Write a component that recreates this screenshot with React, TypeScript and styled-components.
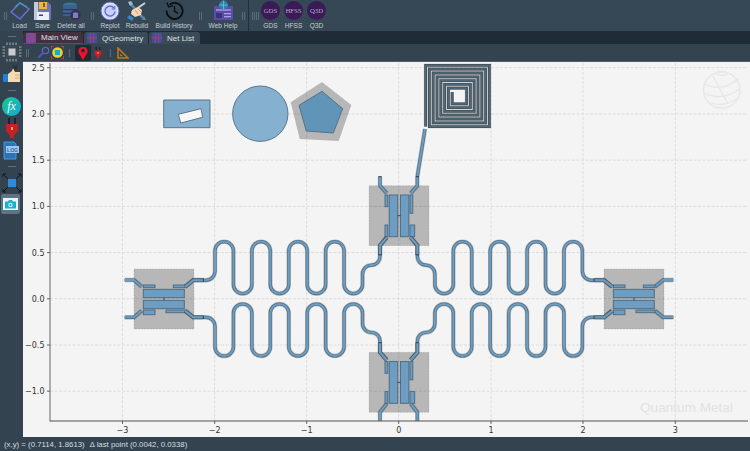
import React from 'react';
import styled, { createGlobalStyle } from 'styled-components';

const GlobalStyle = createGlobalStyle`
	html, body {
		margin: 0;
		padding: 0;
		background: #33434f;
	}
	body {
		font-family: "Liberation Sans", Arial, sans-serif;
	}
`;

const Page = styled.div`
	width: 750px;
	height: 451px;
	overflow: hidden;
	display: grid;
	grid-template-rows: 31px 406px 14px;
	background: #33434f;
`;

const TopBar = styled.div`
	display: flex;
	align-items: stretch;
	padding-left: 4px;
	background: #364755;
`;

const Grip = styled.div`
	width: 3px;
	height: 8px;
	align-self: center;
	margin: ${(p: { $m?: string }) => p.$m || '0'};
	border-left: 1px solid #5b6c79;
	border-right: 1px solid #5b6c79;
	box-sizing: border-box;
`;

const Divider = styled.div`
	width: 1px;
	background: #22303b;
	margin: 0 3px;
`;

const ToolButton = styled.div<{ $w: number }>`
	width: ${(p) => p.$w}px;
	display: flex;
	flex-direction: column;
	align-items: center;
`;

const IconSlot = styled.div`
	height: 21px;
	display: flex;
	align-items: center;
	justify-content: center;
`;

const ToolLabel = styled.span`
	font-size: 6.6px;
	line-height: 10px;
	color: #c6ced5;
	white-space: nowrap;
`;

const Body = styled.div`
	display: grid;
	grid-template-columns: 23px 1fr;
	min-height: 0;
`;

const Sidebar = styled.div`
	display: flex;
	flex-direction: column;
	background: #33434f;
`;

const SideItem = styled.div<{ $h: number; $active?: boolean }>`
	height: ${(p) => p.$h}px;
	display: flex;
	align-items: center;
	justify-content: center;
	flex: none;
	${(p) => p.$active && `
		background: #5f7482;
		border-radius: 2px;
		margin: 0 3px 0 1px;
	`}
`;

const SideRule = styled.div`
	width: 8px;
	height: 1px;
	background: #5f6f7b;
`;

const Main = styled.div`
	display: flex;
	flex-direction: column;
	min-width: 0;
`;

const TabStrip = styled.div`
	height: 13px;
	box-sizing: border-box;
	padding-top: 1px;
	display: flex;
	gap: 1px;
	background: #1f2b36;
`;

const Tab = styled.div<{ $w: number; $active?: boolean }>`
	width: ${(p) => p.$w}px;
	box-sizing: border-box;
	display: flex;
	align-items: center;
	gap: 5px;
	padding-left: 3px;
	font-size: 8px;
	color: #dde2e6;
	background: ${(p) => (p.$active ? '#43303f' : '#3a4a57')};
	border-radius: 3px 3px 0 0;
	border-bottom: ${(p) => (p.$active ? '1px solid #2a5f8f' : 'none')};
`;

const SubBar = styled.div`
	height: 17px;
	display: flex;
	align-items: center;
	background: #33434f;
	border-bottom: 1px solid #505f6b;
`;

const SubButton = styled.div<{ $w: number; $active?: boolean }>`
	width: ${(p) => p.$w}px;
	height: 16px;
	display: flex;
	align-items: center;
	justify-content: center;
	border-radius: 2px;
	background: ${(p) => (p.$active ? '#1f2a33' : 'transparent')};
`;

const SubSep = styled.div`
	width: 1px;
	height: 8px;
	background: #5b6c79;
	margin: 0 5px;
`;

const Canvas = styled.svg`
	display: block;
	flex: 1;
	width: 727px;
	height: 375px;
	background: #f4f4f4;
`;

const StatusBar = styled.div`
	display: flex;
	align-items: center;
	gap: 5px;
	padding-left: 4px;
	font-size: 7.8px;
	color: #d7dee3;
	background: #33434f;
	white-space: pre;
`;

const GridLine = styled.line`
	stroke: #dcdcdc;
	stroke-width: 1;
	stroke-dasharray: 3 1.5;
`;

const TickMark = styled.line`
	stroke: #444;
	stroke-width: 0.8;
`;

const TickText = styled.text`
	font-family: "DejaVu Sans", sans-serif;
	font-size: 8px;
	fill: #333;
`;

const Watermark = styled.text`
	font-family: "Liberation Sans", Arial, sans-serif;
	font-size: 13.6px;
	fill: #e2e2e2;
`;

const GapBlock = styled.rect`
	fill: #000;
	fill-opacity: 0.25;
	stroke: #000;
	stroke-opacity: 0.12;
	stroke-width: 0.8;
	stroke-dasharray: 2 1;
`;

const Pad = styled.rect`
	fill: #6d9dc2;
	stroke: #4a677c;
	stroke-width: 0.9;
`;

const TraceGap = styled.path`
	fill: none;
	stroke: #000;
	stroke-opacity: 0.25;
	stroke-width: 4.4;
`;

const TraceEdge = styled.path`
	fill: none;
	stroke: #4d6a80;
	stroke-width: 3.2;
`;

const TraceCore = styled.path`
	fill: none;
	stroke: #6c9dc2;
	stroke-width: 2;
`;

const Trace = ({ d }: { d: string }) => (
	<>
		<TraceGap d={d} />
		<TraceEdge d={d} />
		<TraceCore d={d} />
	</>
);

const Joint = styled.path`
	fill: none;
	stroke: #26343f;
	stroke-width: 0.9;
`;

const Poly = styled.polygon<{ $fill: string }>`
	fill: ${(p) => p.$fill};
	stroke: #4f6c82;
	stroke-width: 0.9;
`;

const xTicks: [number, string][] = [
	[122.5, '−3'], [214.7, '−2'], [306.7, '−1'], [398.7, '0'], [491, '1'], [583, '2'], [675.3, '3'],
];
const yTicks: [number, string][] = [
	[67.7, '2.5'], [114, '2.0'], [160.2, '1.5'], [206.4, '1.0'], [252.6, '0.5'], [298.8, '0.0'], [345, '−0.5'], [391.2, '−1.0'],
];

// bottom left meander, the other three are mirrors of it
const meander = () => {
	const pitch = 18.44;
	let d = 'M185 310.7 L193.3 317.3 H206 A9 9 0 0 1 215 326.3';
	for (let i = 0; i < 8; i++) {
		const x = 215 + i * pitch;
		const down = i % 2 === 0;
		d += down
			? ` V346.8 A9.22 9.22 0 0 0 ${x + pitch} 346.8`
			: ` V313.2 A9.22 9.22 0 0 1 ${x + pitch} 313.2`;
	}
	d += ' V323.5 A9 9 0 0 0 371.5 332.5 A8.5 8.5 0 0 1 380 341 V352.3 L386.7 360';
	return d;
};

const spiral = () => {
	const p = 3.8;
	let x0 = 425.6, x1 = 489.4, y0 = 65.4, y1 = 126.6;
	let d = `M${x0} ${y1} V${y0}`;
	for (let i = 0; i < 7; i++) {
		d += ` H${x1} V${y1}`;
		x0 += p;
		d += ` H${x0}`;
		y0 += p;
		d += ` V${y0}`;
		x1 -= p;
		y1 -= p;
	}
	return d;
};

// transmon laid out along x, centre (164, 299)
const HorizontalQubit = ({ dx }: { dx: number }) => (
	<g transform={`translate(${dx} 0)`}>
		<GapBlock x={134} y={269} width={60} height={60} />
		<Trace d="M124.7 280 H134 L141.7 286.7" />
		<Trace d="M124.7 317.3 H134 L141.7 310.7" />
		<Trace d="M185 286.7 L193.3 280 H203.3" />
		<Trace d="M185 310.7 L193.3 317.3 H203.3" />
		<Pad x={143.3} y={289.3} width={41} height={8.4} />
		<Pad x={143.3} y={300.3} width={41} height={8.4} />
		<Pad x={143.3} y={285} width={11.7} height={2.7} />
		<Pad x={173.3} y={285} width={11.7} height={2.7} />
		<Pad x={143.3} y={310} width={11.7} height={4.7} />
		<Pad x={166} y={310} width={19} height={2.7} />
		<Joint d="M164 297.7 V300.3" />
	</g>
);

// same transmon turned on its side, dy moves it to the lower slot
const VerticalQubit = ({ dy }: { dy: number }) => (
	<g transform={`translate(0 ${dy})`}>
		<GapBlock x={369} y={185.7} width={60} height={60} />
		<Trace d="M380 176.7 V185.7 L386.7 193.3" />
		<Trace d="M417.3 176.7 V185.7 L410.7 193.3" />
		<Trace d="M386.7 237 L380 245.7 V255" />
		<Trace d="M410.7 237 L417.3 245.7 V255" />
		<Pad x={389.2} y={195} width={8.5} height={41.7} />
		<Pad x={400.4} y={195} width={8.5} height={41.7} />
		<Pad x={385} y={195} width={2.8} height={11.7} />
		<Pad x={410} y={195} width={2.8} height={18.3} />
		<Pad x={385} y={225} width={2.8} height={11.7} />
		<Pad x={410} y={225} width={4.7} height={11.7} />
		<Joint d="M397.7 215.7 H400.4" />
	</g>
);

const Plot = () => {
	const m = meander();
	const s = spiral();
	return (
		<Canvas viewBox="23 62 727 375">
			<defs>
				<clipPath id="axes">
					<rect x={50} y={62} width={698} height={359} />
				</clipPath>
			</defs>
			{xTicks.map(([x]) => <GridLine key={x} x1={x} x2={x} y1={63} y2={421} />)}
			{yTicks.map(([y]) => <GridLine key={y} x1={50} x2={748} y1={y} y2={y} />)}

			<g fill="none" stroke="#e6e6e6" strokeWidth={1.3}>
				<circle cx={721.7} cy={90} r={18.2} />
				<ellipse cx={721.7} cy={73.5} rx={5} ry={1.8} />
				<path d="M704 84 Q722 93 739 78" />
				<path d="M704 93 Q722 102 739.5 89" />
				<path d="M708 102 Q722 108 737 99" />
				<path d="M713 76 L728 104" />
			</g>
			<Watermark x={640} y={411.5}>Quantum Metal</Watermark>

			<g clipPath="url(#axes)">
				<Poly $fill="#86b0d0" points="163.7,100 210,100 210,127.7 163.7,127.7" />
				<Poly $fill="#f7f7f7" points="178.3,114.3 201,108.7 202.7,117.3 180.7,123" />
				<circle cx={260.3} cy={113.7} r={27.7} fill="#86b0d0" stroke="#4f6c82" strokeWidth={0.9} />
				<polygon points="322,82 351.3,105 338.7,141 299.7,139 290.7,102.3" fill="#000" fillOpacity={0.25} />
				<Poly $fill="#6095b8" points="322,91.3 342.7,108.7 333.3,133 306.3,131 299,105.3" />

				<path d={s} fill="none" stroke="#000" strokeOpacity={0.25} strokeWidth={3.5} />
				<path d={s} fill="none" stroke="#45555f" strokeWidth={2.8} />
				<path d={s} fill="none" stroke="#567184" strokeWidth={0.8} />
				<Trace d="M417.3 176.7 L425 129" />

				<HorizontalQubit dx={0} />
				<HorizontalQubit dx={470} />
				<VerticalQubit dy={0} />
				<VerticalQubit dy={166.6} />

				<Trace d={m} />
				<g transform="matrix(-1 0 0 1 797.4 0)"><Trace d={m} /></g>
				<g transform="matrix(1 0 0 -1 0 597.6)"><Trace d={m} /></g>
				<g transform="matrix(-1 0 0 -1 797.4 597.6)"><Trace d={m} /></g>

				<Joint d="M203.3 278.4 V281.6 M203.3 315.7 V318.9 M594.1 278.4 V281.6 M594.1 315.7 V318.9" />
				<Joint d="M378.4 176.7 H381.6 M415.7 176.7 H418.9 M378.4 254.9 H381.6 M415.7 254.9 H418.9" />
				<Joint d="M378.4 342.7 H381.6 M415.7 342.7 H418.9" />
			</g>

			<line x1={50} x2={50} y1={63} y2={421.5} stroke="#8d8d8d" strokeWidth={1.4} />
			<line x1={50} x2={748} y1={421} y2={421} stroke="#555" strokeWidth={1} />
			{xTicks.map(([x, t]) => (
				<g key={t}>
					<TickMark x1={x} x2={x} y1={421} y2={424} />
					<TickText x={x} y={433} textAnchor="middle">{t}</TickText>
				</g>
			))}
			{yTicks.map(([y, t]) => (
				<g key={t}>
					<TickMark x1={47} x2={50} y1={y} y2={y} />
					<TickText x={44.5} y={y + 3} textAnchor="end">{t}</TickText>
				</g>
			))}
		</Canvas>
	);
};

const LoadIcon = () => (
	<svg width="20" height="20" viewBox="0 0 20 20" fill="none">
		<path d="M1 11 L10 2 L19 8 L10 18 Z" stroke="#6f6fd8" strokeWidth="1.4" />
		<path d="M5 6 L10 2 L17 6" stroke="#3f9fb5" strokeWidth="1.2" />
	</svg>
);

const SaveIcon = () => (
	<svg width="19" height="20" viewBox="0 0 19 20">
		<path d="M1 1 H15 L18 4 V19 H1 Z" fill="#6f74b8" />
		<path d="M1 1 H5 V19 H1 Z" fill="#c3c6e6" />
		<rect x="6" y="1" width="8" height="7" fill="#f3b23a" />
		<rect x="10" y="2" width="2" height="4" fill="#8b5a12" />
		<rect x="4" y="11" width="12" height="8" fill="#eceef8" />
		<rect x="6" y="13.5" width="4" height="1.5" fill="#3c4270" />
	</svg>
);

const DeleteIcon = () => (
	<svg width="19" height="20" viewBox="0 0 19 20">
		<ellipse cx="8" cy="4" rx="7" ry="2.5" fill="#2f7d92" />
		<rect x="1" y="4" width="14" height="11" fill="#3d5f96" />
		<rect x="1" y="8" width="14" height="1" fill="#2a3a55" />
		<rect x="1" y="12" width="14" height="1" fill="#2a3a55" />
		<circle cx="13.5" cy="14" r="5.2" fill="#34344f" />
		<rect x="11" y="11.5" width="5" height="5.5" rx="0.6" fill="#7d7fc0" />
	</svg>
);

const ReplotIcon = () => (
	<svg width="20" height="20" viewBox="0 0 20 20" fill="none">
		<circle cx="10" cy="10" r="9" fill="#dfe4f7" stroke="#5f6bc4" strokeWidth="1" />
		<circle cx="10" cy="10" r="7" fill="#c9d0f2" />
		<path d="M14 7 A5 5 0 1 0 15 10.5" stroke="#5a68d8" strokeWidth="1.3" />
		<path d="M14.8 4.8 V8 H11.8" stroke="#5a68d8" strokeWidth="1" />
	</svg>
);

const RebuildIcon = () => (
	<svg width="20" height="20" viewBox="0 0 20 20" fill="none">
		<path d="M3 2 L16 17" stroke="#5f8ba3" strokeWidth="2.6" />
		<path d="M1 1 L3 5 L6 3 L4 0" fill="#9dbccb" />
		<path d="M17 15 L19 19 L15 19 Z" fill="#5f8ba3" />
		<path d="M18 2 L5 11" stroke="#c5d8e0" strokeWidth="2" />
		<path d="M5 9 L11 6 L15 9 L14 14 L8 16 L4 13 Z" fill="#f6d7b5" />
		<path d="M8 9 L11 13 M11 8 L14 11" stroke="#c08f62" strokeWidth="0.8" />
		<path d="M2 14 L7 17 L5 20 L0 17 Z" fill="#2d87c9" />
	</svg>
);

const HistoryIcon = () => (
	<svg width="19" height="19" viewBox="0 0 19 19" fill="none" stroke="#0c0f12" strokeWidth="1.8">
		<path d="M4.5 3.8 A8 8 0 1 1 1.6 9.5" />
		<path d="M2 1.5 L3.6 6 L8 4.6" strokeWidth="1.3" />
		<path d="M9.5 5 V10 L13 12.5" strokeWidth="1.5" />
	</svg>
);

const WebHelpIcon = () => (
	<svg width="21" height="21" viewBox="0 0 21 21">
		<rect x="1" y="6" width="19" height="14" rx="1" fill="#5b4ea8" />
		<rect x="3" y="9" width="15" height="2" fill="#8f86d8" />
		<rect x="3" y="13" width="6" height="5" fill="#3b3278" />
		<rect x="11" y="13" width="7" height="1.3" fill="#a9a2e6" />
		<rect x="11" y="16" width="7" height="1.3" fill="#a9a2e6" />
		<circle cx="10.5" cy="5" r="4.4" fill="#2a86a8" />
		<path d="M6.1 5 H14.9 M10.5 0.6 V9.4" stroke="#7fd0e4" strokeWidth="0.6" />
	</svg>
);

const CircleMark = styled.div`
	width: 19px;
	height: 19px;
	border-radius: 50%;
	background: #3a1b57;
	color: #b5a4c6;
	font-family: "Liberation Serif", serif;
	font-size: 6.8px;
	display: flex;
	align-items: center;
	justify-content: center;
`;

const ChipIcon = () => (
	<svg width="20" height="20" viewBox="0 0 20 20">
		<g stroke="#b9c0c5" strokeWidth="0.9">
			<path d="M5 0.5 V19.5 M8 0.5 V19.5 M11 0.5 V19.5 M14 0.5 V19.5" />
			<path d="M0.5 5 H19.5 M0.5 8 H19.5 M0.5 11 H19.5 M0.5 14 H19.5" />
		</g>
		<rect x="3" y="3" width="14" height="14" fill="#3a4853" />
		<rect x="6.5" y="6.5" width="7" height="7" fill="#c9cdd0" />
	</svg>
);

const ThumbIcon = () => (
	<svg width="18" height="20" viewBox="0 0 18 20">
		<path d="M10 0 L11 3 L14 1 L14 5 L11 8 L9 5 Z" fill="#2e2f33" />
		<rect x="0" y="10" width="5" height="8" rx="1" fill="#1f7fd0" />
		<path d="M5 10 L9 7 L10 4 L12 8 H17 V18 H5 Z" fill="#f7d9b4" />
		<path d="M12 11 H17 M12 14 H17" stroke="#c99b6c" strokeWidth="0.7" />
	</svg>
);

const FxIcon = styled.div`
	width: 19px;
	height: 19px;
	border-radius: 50%;
	background: linear-gradient(135deg, #18c98f, #14a8d8);
	color: #fff;
	font-family: "Liberation Serif", serif;
	font-style: italic;
	font-size: 12px;
	display: flex;
	align-items: center;
	justify-content: center;
`;

const RedPlugIcon = ({ size }: { size: number }) => (
	<svg width={size} height={size * 1.5} viewBox="0 0 14 21">
		<rect x="3" y="0" width="2" height="7" fill="#1c2329" />
		<rect x="9" y="0" width="2" height="7" fill="#1c2329" />
		<path d="M1 6 H13 V13 L9 17 V20 H5 V17 L1 13 Z" fill="#c8202a" />
		<rect x="6" y="9" width="2" height="3" fill="#e8b23a" />
	</svg>
);

const LogIcon = () => (
	<svg width="17" height="19" viewBox="0 0 17 19" fill="none">
		<path d="M1 1 H11 L13 3 V18 H1 Z" fill="#2f71b5" stroke="#4a9be0" />
		<rect x="3" y="5" width="13" height="7" fill="#9cc8ee" />
		<text x="9.5" y="10.6" fontSize="5" fontFamily="Liberation Sans" fontWeight="700" textAnchor="middle" fill="#2c6cab">LOG</text>
	</svg>
);

const ExpandIcon = () => (
	<svg width="20" height="20" viewBox="0 0 20 20" fill="none">
		<rect x="6" y="6" width="8" height="8" fill="#2b8be0" />
		<path d="M1 1 L6 6 M19 1 L14 6 M1 19 L6 14 M19 19 L14 14" stroke="#111a22" strokeWidth="1" />
		<path d="M1 4 V1 H4 M16 1 H19 V4 M1 16 V19 H4 M16 19 H19 V16" stroke="#111a22" strokeWidth="1" />
	</svg>
);

const CameraIcon = () => (
	<svg width="15" height="12" viewBox="0 0 15 12">
		<rect x="0" y="0" width="15" height="12" fill="#eaf4f7" />
		<path d="M2 3.5 H5 L6 2 H9 L10 3.5 H13 V10.5 H2 Z" fill="#17b2d0" />
		<circle cx="7.5" cy="7" r="2.2" fill="#eaf4f7" />
		<circle cx="7.5" cy="7" r="1.2" fill="#17b2d0" />
	</svg>
);

const TabIcon = ({ tone }: { tone: string }) => (
	<svg width="10" height="10" viewBox="0 0 10 10">
		<rect x="0" y="0" width="10" height="10" rx="1" fill={tone} />
		<path d="M3.3 0 V10 M6.6 0 V10 M0 5 H10" stroke="#c23b5a" strokeWidth="0.8" />
	</svg>
);

const SearchIcon = () => (
	<svg width="13" height="13" viewBox="0 0 13 13" fill="none">
		<circle cx="8.5" cy="4.5" r="3.2" stroke="#5f63c8" strokeWidth="1.3" />
		<path d="M6 7 L1 12" stroke="#4f57b8" strokeWidth="1.8" />
	</svg>
);

const TargetIcon = () => (
	<svg width="13" height="13" viewBox="0 0 13 13">
		<path d="M0 0 H3 M0 0 V3 M13 0 H10 M13 0 V3 M0 13 H3 M0 13 V10 M13 13 H10 M13 13 V10" stroke="#d8504a" strokeWidth="1.2" />
		<circle cx="6.5" cy="6.5" r="5.3" fill="#f2d31b" />
		<rect x="4" y="4" width="5" height="5" fill="#17a8d8" />
	</svg>
);

const PinIcon = () => (
	<svg width="10" height="14" viewBox="0 0 10 14">
		<path d="M5 14 L1 7.5 A4.6 4.6 0 1 1 9 7.5 Z" fill="#f01030" />
		<circle cx="5" cy="4.8" r="1.8" fill="#1f2a33" />
	</svg>
);

const RulerIcon = () => (
	<svg width="12" height="12" viewBox="0 0 12 12" fill="none">
		<path d="M1 1 L11 11 H1 Z" stroke="#c47a1c" strokeWidth="1.5" />
		<path d="M3.2 6.5 L6 9.2 H3.2 Z" fill="#c47a1c" />
	</svg>
);

const App: React.FC = () => {
	return (
		<Page>
			<GlobalStyle />
			<TopBar>
				<Grip />
				<ToolButton $w={25}><IconSlot><LoadIcon /></IconSlot><ToolLabel>Load</ToolLabel></ToolButton>
				<ToolButton $w={21}><IconSlot><SaveIcon /></IconSlot><ToolLabel>Save</ToolLabel></ToolButton>
				<ToolButton $w={36}><IconSlot><DeleteIcon /></IconSlot><ToolLabel>Delete all</ToolLabel></ToolButton>
				<Grip $m="0 3px 0 2px" />
				<ToolButton $w={26}><IconSlot><ReplotIcon /></IconSlot><ToolLabel>Replot</ToolLabel></ToolButton>
				<ToolButton $w={28}><IconSlot><RebuildIcon /></IconSlot><ToolLabel>Rebuild</ToolLabel></ToolButton>
				<ToolButton $w={46}><IconSlot><HistoryIcon /></IconSlot><ToolLabel>Build History</ToolLabel></ToolButton>
				<Grip $m="0 2px" />
				<ToolButton $w={38}><IconSlot><WebHelpIcon /></IconSlot><ToolLabel>Web Help</ToolLabel></ToolButton>
				<Grip />
				<Divider />
				<Grip />
				<Grip $m="0 0 0 1px" />
				<ToolButton $w={23}><IconSlot><CircleMark>GDS</CircleMark></IconSlot><ToolLabel>GDS</ToolLabel></ToolButton>
				<ToolButton $w={23}><IconSlot><CircleMark>HFSS</CircleMark></IconSlot><ToolLabel>HFSS</ToolLabel></ToolButton>
				<ToolButton $w={23}><IconSlot><CircleMark>Q3D</CircleMark></IconSlot><ToolLabel>Q3D</ToolLabel></ToolButton>
			</TopBar>
			<Body>
				<Sidebar>
					<SideItem $h={10}><SideRule /></SideItem>
					<SideItem $h={22}><ChipIcon /></SideItem>
					<SideItem $h={21}><ThumbIcon /></SideItem>
					<SideItem $h={12}><SideRule /></SideItem>
					<SideItem $h={21}><FxIcon>fx</FxIcon></SideItem>
					<SideItem $h={22}><RedPlugIcon size={14} /></SideItem>
					<SideItem $h={22}><LogIcon /></SideItem>
					<SideItem $h={11}><SideRule /></SideItem>
					<SideItem $h={22}><ExpandIcon /></SideItem>
					<SideItem $h={20} $active><CameraIcon /></SideItem>
				</Sidebar>
				<Main>
					<TabStrip>
						<Tab $w={60} $active><TabIcon tone="#6b4fa8" />Main View</Tab>
						<Tab $w={64}><TabIcon tone="#3f4fa0" />QGeometry</Tab>
						<Tab $w={51}><TabIcon tone="#3f4fa0" />Net List</Tab>
					</TabStrip>
					<SubBar>
						<Grip $m="0 7px 0 3px" />
						<SubButton $w={14}><SearchIcon /></SubButton>
						<SubButton $w={14}><TargetIcon /></SubButton>
						<SubSep />
						<SubButton $w={16} $active><PinIcon /></SubButton>
						<SubButton $w={14}><RedPlugIcon size={8} /></SubButton>
						<SubSep />
						<SubButton $w={14}><RulerIcon /></SubButton>
					</SubBar>
					<Plot />
				</Main>
			</Body>
			<StatusBar>
				<span>(x,y) = (0.7114, 1.8613)</span>
				<span>Δ last point (0.0042, 0.0338)</span>
			</StatusBar>
		</Page>
	);
};

export default App;
